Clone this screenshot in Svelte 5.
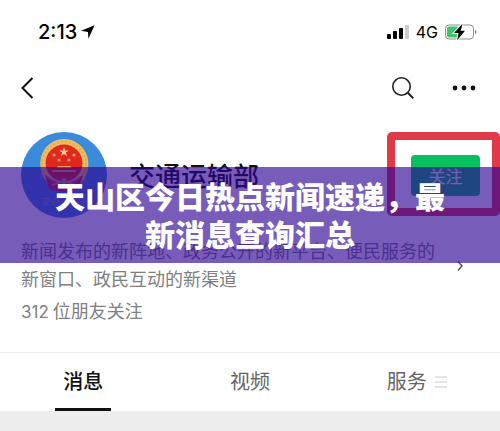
<script lang="ts">
  const account = {
    name: "交通运输部",
    intro: ["新闻发布的新阵地、政务公开的新平台、便民服务的", "新窗口、政民互动的新渠道"],
    friends: 312,
  };

  const tabs = [
    { id: "messages", label: "消息", menu: false },
    { id: "videos", label: "视频", menu: false },
    { id: "services", label: "服务", menu: true },
  ];

  let active = $state("messages");
</script>

<div class="page">
  <div class="status">
    <span class="time">2:13</span>
    <svg class="arrow" width="14" height="14" viewBox="0 0 14 14">
      <path d="M13.6.2 0 5.800l7 1.200L7.400 13.800Z" fill="#000" />
    </svg>
    <svg class="signal" width="24" height="16" viewBox="0 0 24 16">
      <rect x="1" y="10" width="4" height="5" rx="1" />
      <rect x="7" y="7" width="4" height="8" rx="1" />
      <rect x="13" y="4" width="4" height="11" rx="1" />
      <rect x="19" y="1" width="4" height="14" rx="1" fill="#ccc" />
    </svg>
    <span class="network">4G</span>
    <svg width="34" height="18" viewBox="0 0 34 18">
      <rect x="1.5" y="2" width="28" height="14" rx="3.5" fill="none" stroke="#8c8c8c" />
      <rect x="3" y="3.5" width="12" height="11" rx="2" fill="#3fc46c" />
      <path d="M31 7v4c2-.6 2-3.400 0-4Z" fill="#8c8c8c" />
      <path d="M18.500.8 10 10h4.500l-1.300 7.200L21 7.800h-4.200Z" fill="#000" stroke="#fff" stroke-width="2" paint-order="stroke" />
    </svg>
  </div>

  <header class="nav">
    <button type="button" class="icon" aria-label="返回">
      <svg width="14" height="24" viewBox="0 0 14 24">
        <path d="M12.500 2 2.500 12l10 10" fill="none" stroke="#111" stroke-width="2" />
      </svg>
    </button>
    <button type="button" class="icon search" aria-label="搜索">
      <svg width="24" height="24" viewBox="0 0 24 24" fill="none" stroke="#222">
        <circle cx="10.500" cy="10.500" r="8.700" stroke-width="1.600" />
        <path d="m16.800 16.800 5.400 5.400" stroke-width="2" />
      </svg>
    </button>
    <button type="button" class="icon" aria-label="更多">
      <svg width="24" height="24" viewBox="0 0 24 24" fill="#111">
        <circle cx="3" cy="12" r="2.400" />
        <circle cx="12" cy="12" r="2.400" />
        <circle cx="21" cy="12" r="2.400" />
      </svg>
    </button>
  </header>

  <section class="profile">
    <div class="head">
      <svg class="avatar" width="86" height="86" viewBox="0 0 86 86">
        <circle cx="43" cy="43" r="43" fill="#3b8bdb" />
        <path d="M25 49C12 30 23 7 43 7s32 23 19 42l-5 8H30Z" fill="#f0bd60" />
        <circle cx="43" cy="32" r="22" fill="none" stroke="#d9a355" stroke-width="1.500" stroke-dasharray="2 2" />
        <circle cx="43" cy="31" r="18.500" fill="#e0281f" />
        <path d="m43 15 1.200 3.400h3.600l-2.900 2.200 1.100 3.400-3-2-3 2 1.100-3.400-2.900-2.200h3.600Z" fill="#ffc98a" />
        <g fill="#f59a5a">
          <circle cx="33" cy="23" r="1.600" />
          <circle cx="53" cy="23" r="1.600" />
          <circle cx="38" cy="28" r="1.600" />
          <circle cx="48" cy="28" r="1.600" />
          <path d="M37 34h12l2 2H35ZM31 38h24v2H31Z" />
        </g>
        <path d="M24 43q19 14 38 0l-4 14q-15 5-30 0Z" fill="#c92846" />
        <path d="M27 45q16 11 32 0M31 53l12-4 12 4" fill="none" stroke="#d78a7a" stroke-width="2" />
        <circle cx="43" cy="49" r="3" fill="#d78a7a" />
        <text x="43" y="73" text-anchor="middle" font-size="9" fill="#7f92d8">交通运输部</text>
      </svg>
      <h1 class="name">{account.name}</h1>
      <div class="highlight">
        <button type="button" class="follow">关注</button>
      </div>
    </div>

    <div class="intro">
      <p>{account.intro[0]}<br />{account.intro[1]}</p>
      <svg class="more" width="8" height="12" viewBox="0 0 8 12">
        <path d="m2 1.500 4 4.500-4 4.500" fill="none" stroke="#555" stroke-width="1.500" />
      </svg>
    </div>
    <p class="friends"><span>{account.friends}</span>位朋友关注</p>
  </section>

  <nav class="tabs">
    {#each tabs as tab}
      <button type="button" class="tab" class:active={active === tab.id} onclick={() => (active = tab.id)}>
        <span class="label">{tab.label}</span>
        {#if tab.menu}
          <svg width="12" height="12" viewBox="0 0 12 12">
            <path d="M0 1h12M0 6h12M0 11h12" stroke="#ddd" stroke-width="1.500" />
          </svg>
        {/if}
      </button>
    {/each}
  </nav>

  <h2 class="banner">天山区今日热点新闻速递，最新消息查询汇总</h2>
</div>

<style>
  :global(body) {
    background: #ededed;
  }

  .page {
    position: relative;
    background: #fff;
    color: #111;
    font-family: "Liberation Sans", "Noto Sans CJK SC", sans-serif;
    overflow: hidden;
  }

  button {
    border: none;
    background: none;
    padding: 0;
    font-family: inherit;
    cursor: pointer;
  }

  svg {
    flex: none;
    display: block;
  }

  .status {
    display: flex;
    align-items: center;
    height: 64px;
    padding: 0 22px 0 38px;
    color: #000;
    font-family: Inter, "Liberation Sans", sans-serif;
  }

  .time {
    font-size: 20px;
    font-weight: 500;
  }

  .arrow {
    margin-left: 4px;
  }

  .signal {
    margin-left: auto;
  }

  .network {
    margin: 0 6px;
    font-size: 16px;
    font-weight: 400;
  }

  .nav {
    display: flex;
    align-items: center;
    height: 48px;
    padding: 0 24px 0 20px;
  }

  .search {
    margin-left: auto;
    margin-right: 37px;
  }

  .profile {
    padding: 20px 0 26px 21px;
  }

  .head {
    display: flex;
    height: 86px;
  }

  .avatar {
    font-family: "Noto Sans CJK SC", sans-serif;
  }

  .name {
    flex: 1;
    margin: 0 0 0 22px;
    font-size: 26px;
    line-height: 90px;
    font-weight: 500;
  }

  .highlight {
    box-sizing: border-box;
    height: 84px;
    padding: 15px 12px 0 16px;
    border: 8px solid #e0394a;
    border-radius: 5px;
  }

  .follow {
    width: 69px;
    height: 41px;
    border-radius: 4px;
    background: #07c160;
    color: #fff;
    font-size: 17px;
  }

  .intro {
    display: flex;
    align-items: center;
    justify-content: space-between;
    padding: 20px 36px 0 0;
  }

  .intro p {
    margin: 0;
    color: #808080;
    font-size: 18px;
    line-height: 28px;
  }

  .friends {
    margin: 4px 0 0;
    color: #808080;
    font-size: 18px;
    line-height: 28px;
  }

  .friends span {
    margin-right: 4px;
    font-family: Inter, "Liberation Sans", sans-serif;
    font-size: 17px;
  }

  .tabs {
    display: grid;
    grid-template-columns: repeat(3, 1fr);
    border-top: 1px solid #ededed;
  }

  .tab {
    display: flex;
    align-items: center;
    justify-content: center;
    gap: 8px;
    height: 58px;
    color: #666;
    font-size: 20px;
  }

  .label {
    box-sizing: border-box;
    height: 58px;
    line-height: 58px;
  }

  .active .label {
    padding: 0 8px;
    border-bottom: 3px solid #111;
    color: #111;
    font-weight: 500;
  }

  .banner {
    position: absolute;
    top: 167px;
    left: 0;
    right: 0;
    margin: 0;
    padding: 12px 48px 8px;
    background: rgba(46, 4, 148, 0.65);
    color: #fff;
    font-size: 30px;
    line-height: 38px;
    font-weight: 900;
    text-align: center;
  }
</style>
